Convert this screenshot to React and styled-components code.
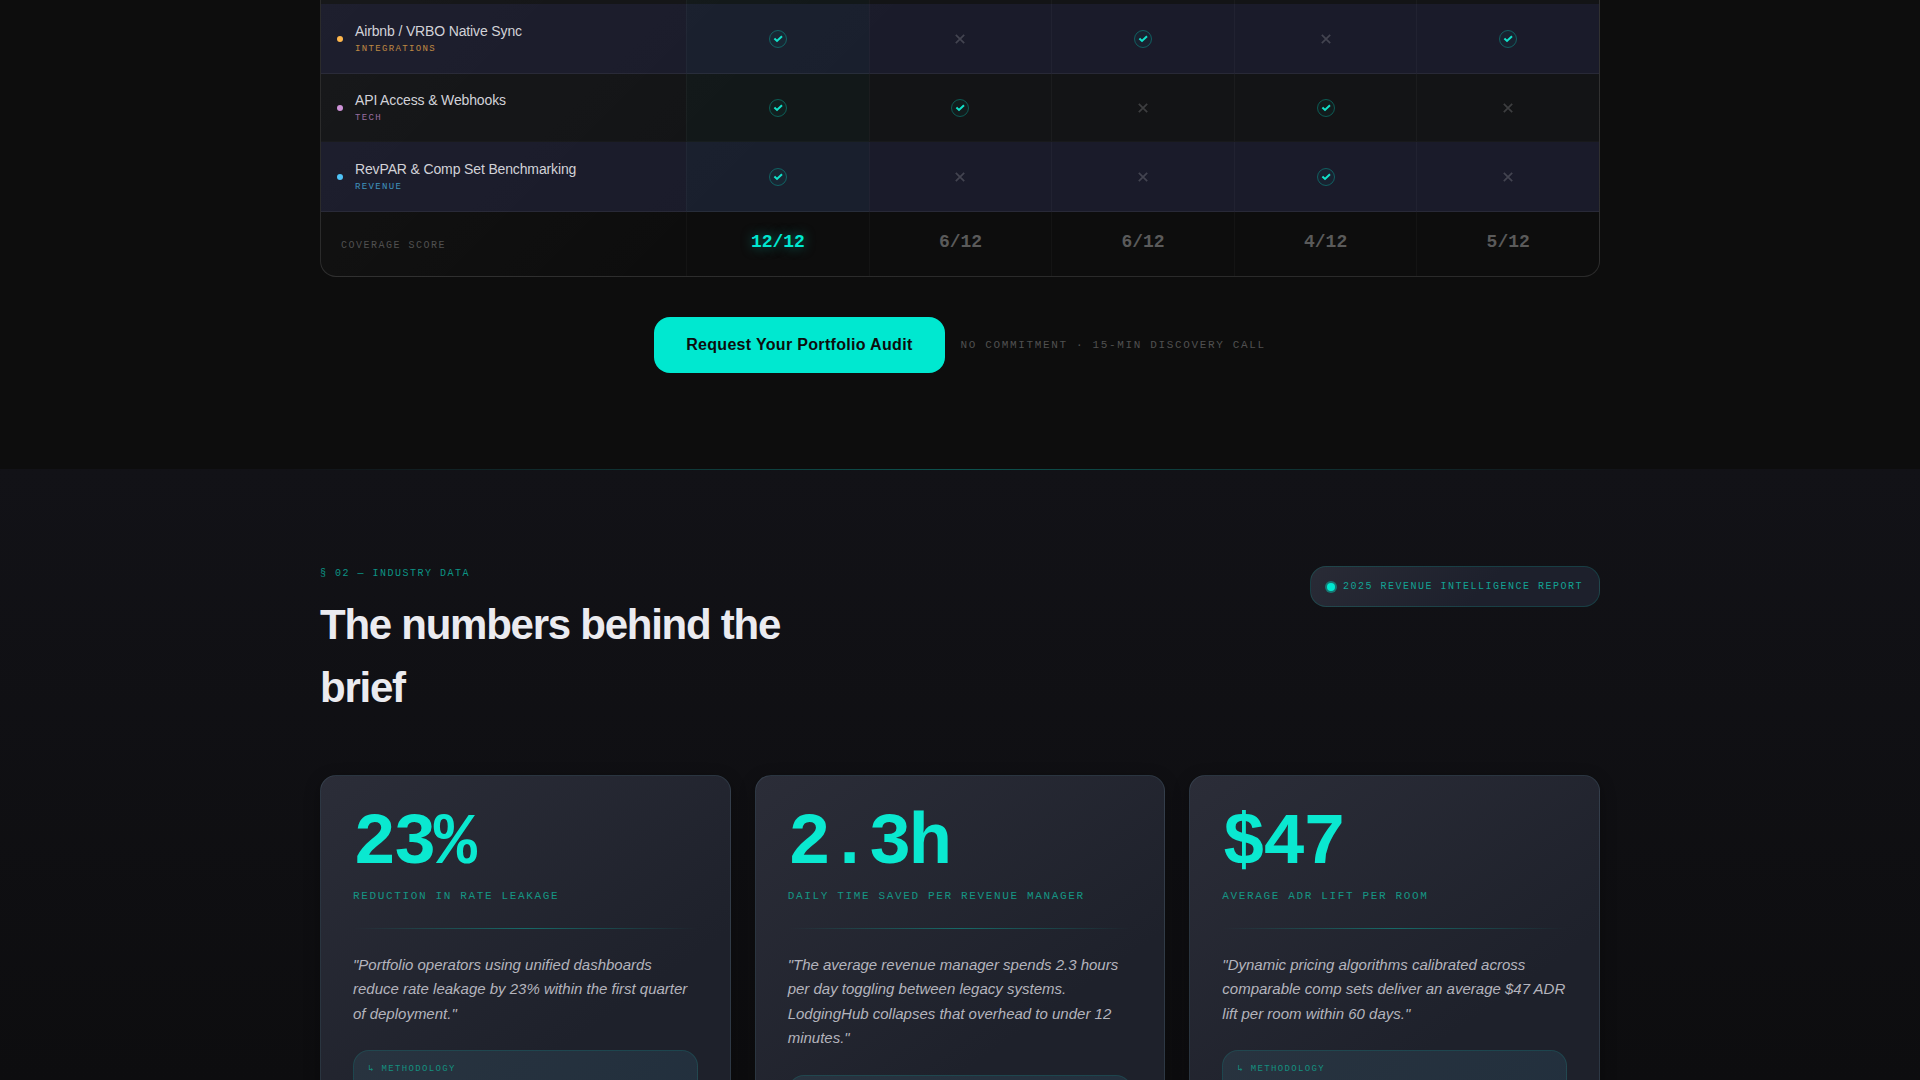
import React from 'react'
import styled, { createGlobalStyle } from 'styled-components'

const rows = [
    { name: 'Airbnb / VRBO Native Sync', tag: 'Integrations', color: '#ffb74d', marks: [1, 0, 1, 0, 1] },
    { name: 'API Access & Webhooks', tag: 'Tech', color: '#ce93d8', marks: [1, 1, 0, 1, 0] },
    { name: 'RevPAR & Comp Set Benchmarking', tag: 'Revenue', color: '#4fc3f7', marks: [1, 0, 0, 1, 0] },
]

const scores = ['12/12', '6/12', '6/12', '4/12', '5/12']

const stats = [
    {
        value: '23%',
        label: 'Reduction in rate leakage',
        quote: '"Portfolio operators using unified dashboards reduce rate leakage by 23% within the first quarter of deployment."',
    },
    {
        value: '2.3h',
        label: 'Daily time saved per revenue manager',
        quote: '"The average revenue manager spends 2.3 hours per day toggling between legacy systems. LodgingHub collapses that overhead to under 12 minutes."',
    },
    {
        value: '$47',
        label: 'Average ADR lift per room',
        quote: '"Dynamic pricing algorithms calibrated across comparable comp sets deliver an average $47 ADR lift per room within 60 days."',
    },
]

function Mark({ on }) {
    if (on) {
        return (
            <MarkIcon viewBox='0 0 18 18' role='img' aria-label='Included'>
                <circle cx='9' cy='9' r='8.5' fill='#00e8d0' fillOpacity='0.04' stroke='#00e8d0' strokeOpacity='0.32' />
                <path d='M5.4 8.6 L8 11 L13 6.2' fill='none' stroke='#12e2ca' strokeWidth='2' />
            </MarkIcon>
        )
    }
    return (
        <MarkIcon viewBox='0 0 18 18' role='img' aria-label='Not included'>
            <path d='M4.8 4.8 L13.2 13.2 M13.2 4.8 L4.8 13.2' fill='none' stroke='#fff' strokeOpacity='0.18' strokeWidth='1.7' />
        </MarkIcon>
    )
}

function Comparison() {
    return (
        <Container>
            <TableCard>
                <Table>
                    <colgroup>
                        <FeatureCol />
                        <col span='5' />
                    </colgroup>
                    <tbody>
                        <TailRow aria-hidden='true'>
                            <td />
                            {scores.map((s, i) => <MarkCell key={i} $own={i === 0} />)}
                        </TailRow>
                        {rows.map((row, r) => (
                            <Row key={row.name} $tinted={r % 2 === 0}>
                                <FeatureCell scope='row'>
                                    <Feature $color={row.color}>
                                        <i />
                                        <div>
                                            <p>{row.name}</p>
                                            <small>{row.tag}</small>
                                        </div>
                                    </Feature>
                                </FeatureCell>
                                {row.marks.map((m, i) => (
                                    <MarkCell key={i} $own={i === 0}><Mark on={m} /></MarkCell>
                                ))}
                            </Row>
                        ))}
                    </tbody>
                    <tfoot>
                        <ScoreRow>
                            <th scope='row'>Coverage score</th>
                            {scores.map((s, i) => <ScoreCell key={i} $own={i === 0}>{s}</ScoreCell>)}
                        </ScoreRow>
                    </tfoot>
                </Table>
            </TableCard>
            <Cta>
                <CtaButton type='button'>Request Your Portfolio Audit</CtaButton>
                <CtaNote>No commitment · 15-min discovery call</CtaNote>
            </Cta>
        </Container>
    )
}

function StatCard({ value, label, quote }) {
    return (
        <Card>
            <Value>{value}</Value>
            <StatLabel>{label}</StatLabel>
            <Divider />
            <Quote>{quote}</Quote>
            <Method>↳ Methodology</Method>
        </Card>
    )
}

function App() {
    return (
        <Page>
            <GlobalStyle />
            <Comparison />
            <Industry>
                <GlowLine />
                <Container>
                    <Header>
                        <div>
                            <Eyebrow>§ 02 — Industry data</Eyebrow>
                            <Title>The numbers behind the brief</Title>
                        </div>
                        <Badge><i />2025 Revenue Intelligence Report</Badge>
                    </Header>
                    <Cards>
                        {stats.map(s => <StatCard key={s.value} {...s} />)}
                    </Cards>
                </Container>
            </Industry>
        </Page>
    )
}

const GlobalStyle = createGlobalStyle`
    *{
        box-sizing: border-box;
        margin: 0;
        padding: 0;
    }
    body{
        background: #0d0d0d;
        color: #e8e8ed;
        font-family: 'Liberation Sans', Arial, sans-serif;
        line-height: 1.5;
    }
`;

const mono = `'Liberation Mono', 'Courier New', monospace`;

const Page = styled.main`
    display: flex;
    flex-direction: column;
    height: 100vh;
    overflow: hidden;
`;

const Container = styled.div`
    width: 100%;
    max-width: 1280px;
    margin: 0 auto;
`;

const TableCard = styled.div`
    border: 1px solid rgba(255, 255, 255, 0.12);
    border-top: 0;
    border-radius: 0 0 16px 16px;
    overflow: hidden;
    background: linear-gradient(135deg, rgba(255, 255, 255, 0.03), rgba(255, 255, 255, 0.004) 40%);
`;

const Table = styled.table`
    width: 100%;
    table-layout: fixed;
    border-collapse: separate;
    border-spacing: 0;
`;

const FeatureCol = styled.col`
    width: calc(200% / 7);
`;

const Row = styled.tr`
    height: ${p => p.$tinted ? '70px' : '68px'};
    background: ${p => p.$tinted ? 'rgba(40, 42, 72, 0.5)' : 'rgba(32, 36, 44, 0.3)'};
    td, th{
        border-bottom: 1px solid rgba(255, 255, 255, ${p => p.$tinted ? 0.06 : 0.02});
    }
`;

const TailRow = styled.tr`
    height: 4px;
    background: rgba(32, 36, 44, 0.3);
`;

const FeatureCell = styled.th`
    padding: 0 16px;
    text-align: left;
    font-weight: 400;
`;

const Feature = styled.div`
    display: flex;
    align-items: center;
    gap: 12px;
    i{
        width: 6px;
        height: 6px;
        border-radius: 50%;
        background: ${p => p.$color};
    }
    p{
        font-size: 14px;
        line-height: 21px;
        letter-spacing: -0.01em;
        color: #d2d2d8;
    }
    small{
        display: block;
        font-family: ${mono};
        font-size: 9px;
        line-height: 14px;
        letter-spacing: 0.15em;
        text-transform: uppercase;
        color: ${p => p.$color};
        opacity: 0.7;
    }
`;

const MarkCell = styled.td`
    border-left: 1px solid rgba(255, 255, 255, 0.03);
    text-align: center;
    background: ${p => p.$own ? 'rgba(0, 232, 208, 0.02)' : 'none'};
`;

const MarkIcon = styled.svg`
    display: block;
    width: 18px;
    height: 18px;
    margin: 0 auto;
`;

const ScoreRow = styled.tr`
    height: 64px;
    font-family: ${mono};
    vertical-align: top;
    th{
        padding: 26px 20px 0;
        text-align: left;
        font-size: 10px;
        font-weight: 400;
        letter-spacing: 0.15em;
        text-transform: uppercase;
        color: #505050;
    }
`;

const ScoreCell = styled.td`
    padding: 17px 0 0;
    border-left: 1px solid rgba(255, 255, 255, 0.03);
    text-align: center;
    font-size: 18px;
    font-weight: 700;
    color: ${p => p.$own ? '#00e8d0' : '#5a5a5a'};
    text-shadow: ${p => p.$own ? '0 0 12px rgba(0, 232, 208, 0.5)' : 'none'};
`;

const Cta = styled.div`
    display: flex;
    align-items: center;
    justify-content: center;
    gap: 16px;
    padding: 40px 0 96px;
`;

const CtaButton = styled.button`
    height: 56px;
    padding: 0 32px;
    border: 0;
    border-radius: 16px;
    background: #00e8d0;
    color: #0d0d0d;
    font-family: inherit;
    font-size: 16px;
    font-weight: 700;
    letter-spacing: 0.02em;
    cursor: pointer;
`;

const CtaNote = styled.span`
    font-family: ${mono};
    font-size: 11px;
    line-height: 16px;
    letter-spacing: 0.15em;
    text-transform: uppercase;
    color: #505050;
`;

const Industry = styled.section`
    flex: 1;
    min-height: 0;
    background: linear-gradient(180deg, #121217, #0d0d0f);
`;

const GlowLine = styled.div`
    height: 1px;
    margin-bottom: 96px;
    background: linear-gradient(90deg, transparent 15%, rgba(0, 232, 208, 0.3) 50%, transparent 85%);
`;

const Header = styled.header`
    display: flex;
    align-items: flex-start;
    justify-content: space-between;
    margin-bottom: 56px;
`;

const Eyebrow = styled.p`
    margin-bottom: 12px;
    font-family: ${mono};
    font-size: 10px;
    letter-spacing: 0.15em;
    text-transform: uppercase;
    color: #0c9485;
`;

const Title = styled.h2`
    max-width: 480px;
    font-size: 42px;
    font-weight: 700;
    letter-spacing: -0.03em;
    color: #ebebf0;
`;

const Badge = styled.div`
    display: flex;
    align-items: center;
    gap: 8px;
    padding: 12px 16px;
    border: 1px solid rgba(0, 232, 208, 0.15);
    border-radius: 16px;
    background: linear-gradient(135deg, #292b36, #1d202c 60%);
    font-family: ${mono};
    font-size: 10px;
    letter-spacing: 0.15em;
    text-transform: uppercase;
    color: #13a294;
    i{
        width: 8px;
        height: 8px;
        border-radius: 50%;
        background: #00e8d0;
        box-shadow: 0 0 0 2px rgba(0, 232, 208, 0.4);
    }
`;

const Cards = styled.div`
    display: grid;
    grid-template-columns: repeat(3, 1fr);
    gap: 24px;
`;

const Card = styled.article`
    padding: 32px;
    border: 1px solid rgba(130, 200, 220, 0.12);
    border-radius: 16px;
    background: linear-gradient(145deg, #2b2d38, #1e212b 60%);
    box-shadow: 0 4px 16px rgba(0, 0, 0, 0.3);
`;

const Value = styled.p`
    font-family: ${mono};
    font-size: 72px;
    font-weight: 700;
    line-height: 1;
    letter-spacing: -0.04em;
    color: #0ae8d0;
`;

const StatLabel = styled.p`
    margin-top: 8px;
    font-family: ${mono};
    font-size: 11px;
    line-height: 16px;
    letter-spacing: 0.15em;
    text-transform: uppercase;
    color: #159684;
`;

const Divider = styled.hr`
    height: 1px;
    margin: 24px 0;
    border: 0;
    background: linear-gradient(90deg, transparent, rgba(0, 232, 208, 0.35), transparent);
`;

const Quote = styled.blockquote`
    font-size: 15px;
    font-style: italic;
    line-height: 1.625;
    color: #b4b4bd;
`;

const Method = styled.div`
    min-height: 120px;
    margin-top: 24px;
    padding: 12px 14px;
    border: 1px solid rgba(0, 232, 208, 0.12);
    border-radius: 16px;
    background: linear-gradient(135deg, #28333f, #212f3d);
    font-family: ${mono};
    font-size: 9px;
    letter-spacing: 0.15em;
    text-transform: uppercase;
    color: #14907f;
`;

export default App
